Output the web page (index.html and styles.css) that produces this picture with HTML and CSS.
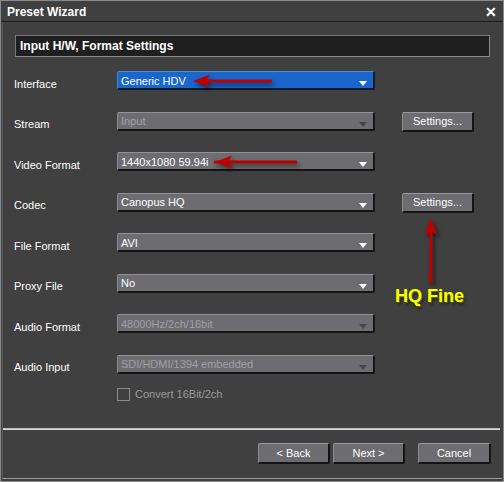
FILE: index.html
```html
<!DOCTYPE html>
<html>
<head>
<meta charset="utf-8">
<link rel="stylesheet" href="styles.css">
</head>
<body>
<div class="window">
  <div class="titlebar">
    <span class="title">Preset Wizard</span>
    <span class="close">&#x2715;</span>
  </div>
  <div class="content">
    <div class="section-head">Input H/W, Format Settings</div>
    <div class="form">
      <div class="label">Interface</div>
      <div class="combo active"><span>Generic HDV</span><i class="tri"></i></div>
      <div class="spacer"></div>

      <div class="label">Stream</div>
      <div class="combo disabled"><span>Input</span><i class="tri"></i></div>
      <div class="btn">Settings...</div>

      <div class="label">Video Format</div>
      <div class="combo"><span>1440x1080 59.94i</span><i class="tri"></i></div>
      <div class="spacer"></div>

      <div class="label">Codec</div>
      <div class="combo"><span>Canopus HQ</span><i class="tri"></i></div>
      <div class="btn">Settings...</div>

      <div class="label">File Format</div>
      <div class="combo"><span>AVI</span><i class="tri"></i></div>
      <div class="spacer"></div>

      <div class="label">Proxy File</div>
      <div class="combo"><span>No</span><i class="tri"></i></div>
      <div class="spacer"></div>

      <div class="label">Audio Format</div>
      <div class="combo disabled"><span>48000Hz/2ch/16bit</span><i class="tri"></i></div>
      <div class="spacer"></div>

      <div class="label">Audio Input</div>
      <div class="combo disabled"><span>SDI/HDMI/1394 embedded</span><i class="tri"></i></div>
      <div class="spacer"></div>
    </div>
    <div class="check-row">
      <span class="checkbox"></span>
      <span class="check-label">Convert 16Bit/2ch</span>
    </div>
    <div class="separator"></div>
    <div class="footer">
      <div class="btn">&lt; Back</div>
      <div class="btn">Next &gt;</div>
      <div class="btn cancel">Cancel</div>
    </div>
  </div>

  <svg class="annotations" viewBox="0 0 504 482" width="504" height="482">
    <g fill="#c00000" stroke="none">
      <rect x="204" y="79.5" width="68" height="3"/>
      <polygon points="193,81 210,74.5 206,81 210,87.5"/>
      <rect x="214" y="160.5" width="83" height="3"/>
      <polygon points="215,162 232,155.5 228,162 232,168.5"/>
      <rect x="429.5" y="229" width="3" height="54"/>
      <polygon points="431,218 424.5,235 431,231 437.5,235"/>
    </g>
  </svg>
  <div class="note">HQ Fine</div>
</div>
</body>
</html>
```

FILE: styles.css
```css
* { box-sizing: border-box; }

html, body {
  margin: 0;
  padding: 0;
  background: #404040;
}

body {
  font-family: "Liberation Sans", Arial, sans-serif;
  font-size: 11px;
  color: #ffffff;
}

.window {
  position: relative;
  width: 504px;
  height: 482px;
  background: #404040;
  border: 1px solid #8a8a8a;
  display: flex;
  flex-direction: column;
}

.titlebar {
  height: 21px;
  flex: 0 0 21px;
  border-bottom: 1px solid #1c1c1c;
  display: flex;
  align-items: center;
  justify-content: space-between;
  padding: 0 6px 0 6px;
}

.title {
  font-weight: bold;
  font-size: 12px;
  padding-top: 1px;
}

.close {
  font-size: 14px;
  font-weight: bold;
  line-height: 1;
  margin-top: 1px;
}

.content {
  flex: 1;
  display: flex;
  flex-direction: column;
  border-left: 1px solid #5a5a5a;
  border-bottom: 1px solid #9a9a9a;
  margin: 0 1px 2px 1px;
}

.section-head {
  margin: 13px 12px 0 12px;
  height: 22px;
  background: #1f1f1f;
  border: 1px solid #777777;
  border-right-color: #8a8a8a;
  border-bottom-color: #8a8a8a;
  font-weight: bold;
  font-size: 12px;
  line-height: 20px;
  padding-left: 4px;
}

.form {
  margin-top: 14px;
  padding-left: 11px;
  display: grid;
  grid-template-columns: 103px 258px 99px;
  grid-auto-rows: 19px;
  row-gap: 21.57px;
}

.label {
  align-self: center;
  padding-top: 6px;
  white-space: nowrap;
}

.combo {
  position: relative;
  height: 19px;
  background: #6d6d71;
  border-top: 1px solid #929296;
  border-left: 1px solid #8a8a8e;
  border-right: 2px solid #141414;
  border-bottom: 2px solid #141414;
  border-radius: 2px;
  display: flex;
  align-items: center;
  padding-left: 3px;
  padding-top: 1px;
  white-space: nowrap;
}

.combo.active {
  background: #1a66cc;
  border-top-color: #4a8ce0;
  border-left-color: #3f82da;
  border-right-color: #0f1a2a;
  border-bottom-color: #0f1a2a;
}

.combo.disabled {
  color: #a0a0a4;
}

.tri {
  position: absolute;
  right: 6px;
  top: 9px;
  width: 0;
  height: 0;
  border-left: 4px solid transparent;
  border-right: 4px solid transparent;
  border-top: 5px solid #ffffff;
}

.combo.disabled .tri {
  border-top-color: #45454a;
}

.btn {
  height: 21px;
  width: 72px;
  background: #6d6d71;
  border-top: 1px solid #9a9a9e;
  border-left: 1px solid #8e8e92;
  border-right: 2px solid #141414;
  border-bottom: 2px solid #141414;
  border-radius: 2px;
  display: flex;
  align-items: center;
  justify-content: center;
  white-space: nowrap;
}

.form .btn {
  height: 20px;
  justify-self: end;
}

.check-row {
  margin-top: 14px;
  padding-left: 114px;
  display: flex;
  align-items: center;
  height: 13px;
}

.checkbox {
  width: 13px;
  height: 13px;
  border: 1px solid #8a8a8a;
}

.check-label {
  margin-left: 5px;
  color: #9a9a9a;
}

.separator {
  margin-top: 27px;
  height: 2px;
  background: #dcdcdc;
  border-top: 1px solid #bdbdbd;
  margin-right: 2px;
}

.footer {
  margin-top: 13px;
  display: flex;
  justify-content: flex-end;
  gap: 3px;
  padding-right: 11px;
}

.footer .cancel {
  margin-left: 10px;
  width: 73px;
}

.annotations {
  position: absolute;
  left: -1px;
  top: -1px;
  pointer-events: none;
  filter: drop-shadow(2px 3px 2px rgba(0, 0, 0, 0.55));
}

.note {
  position: absolute;
  left: 394px;
  top: 285px;
  font-family: "Liberation Sans", Arial, sans-serif;
  font-weight: bold;
  font-size: 18px;
  color: #ffff00;
  text-shadow: 1px 1px 0 #4a6a10, 2px 3px 3px rgba(0, 0, 0, 0.5);
  white-space: nowrap;
}
```
